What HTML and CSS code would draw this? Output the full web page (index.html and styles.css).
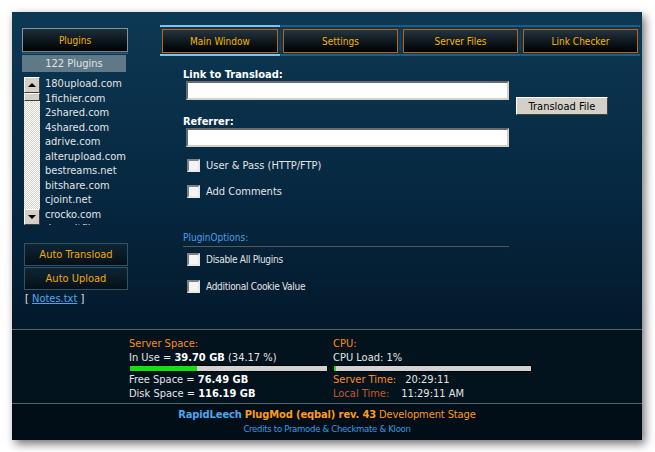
FILE: index.html
```html
<!DOCTYPE html>
<html lang="en">
<head>
    <meta charset="UTF-8">
    <title>RapidLeech PlugMod</title>
    <link rel="stylesheet" href="styles.css">
</head>
<body>
    <div class="window">
        <div class="top">
            <div class="sidebar">
                <div class="side-btn plugins-btn">Plugins</div>
                <div class="plugin-count">122 Plugins</div>

                <div class="plugin-list">
                    <div class="scrollbar">
                        <div class="sb-btn"><span class="arrow-up"></span></div>
                        <div class="sb-thumb"></div>
                        <div class="sb-track"></div>
                        <div class="sb-btn"><span class="arrow-down"></span></div>
                    </div>
                    <div class="list-items">
                        <div>180upload.com</div>
                        <div>1fichier.com</div>
                        <div>2shared.com</div>
                        <div>4shared.com</div>
                        <div>adrive.com</div>
                        <div>alterupload.com</div>
                        <div>bestreams.net</div>
                        <div>bitshare.com</div>
                        <div>cjoint.net</div>
                        <div>crocko.com</div>
                        <div>depositfiles.com</div>
                    </div>
                </div>

                <div class="side-btn auto-btn first">Auto Transload</div>
                <div class="side-btn auto-btn">Auto Upload</div>
                <div class="notes">[ <a href="#">Notes.txt</a> ]</div>
            </div>

            <div class="main">
                <div class="tabs">
                    <div class="tab active"><div class="tab-btn">Main Window</div></div>
                    <div class="tab"><div class="tab-btn">Settings</div></div>
                    <div class="tab"><div class="tab-btn">Server Files</div></div>
                    <div class="tab"><div class="tab-btn">Link Checker</div></div>
                </div>

                <div class="form">
                    <div class="form-row">
                        <div class="fields">
                            <div class="field-label">Link to Transload:</div>
                            <div class="text-input"></div>
                            <div class="field-label second">Referrer:</div>
                            <div class="text-input"></div>
                        </div>
                        <div class="win-btn">Transload File</div>
                    </div>

                    <div class="check-row first">
                        <span class="checkbox"></span>
                        <span>User &amp; Pass (HTTP/FTP)</span>
                    </div>
                    <div class="check-row">
                        <span class="checkbox"></span>
                        <span>Add Comments</span>
                    </div>

                    <div class="section-title">PluginOptions:</div>
                    <div class="check-row small first">
                        <span class="checkbox"></span>
                        <span>Disable All Plugins</span>
                    </div>
                    <div class="check-row small">
                        <span class="checkbox"></span>
                        <span>Additional Cookie Value</span>
                    </div>
                </div>
            </div>
        </div>

        <div class="stats">
            <div class="stat-col">
                <div class="stat-label">Server Space:</div>
                <div>In Use = <b>39.70 GB</b> (34.17 %)</div>
                <div class="bar"><div class="bar-fill" style="width: 34.17%"></div></div>
                <div>Free Space = <b>76.49 GB</b></div>
                <div>Disk Space = <b>116.19 GB</b></div>
            </div>
            <div class="stat-col">
                <div class="stat-label">CPU:</div>
                <div>CPU Load: 1%</div>
                <div class="bar"><div class="bar-fill" style="width: 1%"></div></div>
                <div><span class="stat-label server-label">Server Time:</span> 20:29:11</div>
                <div><span class="local-label">Local Time:</span> 11:29:11 AM</div>
            </div>
        </div>

        <div class="footer">
            <div class="footer-title">
                <b class="blue">RapidLeech</b> <b>PlugMod (eqbal) rev. 43</b> Development Stage
            </div>
            <div class="credits">Credits to Pramode &amp; Checkmate &amp; Kloon</div>
        </div>
    </div>
</body>
</html>
```

FILE: styles.css
```css
:root {
    --tab-text: #f5b400;
    --orange: #ff8a14;
    --blue: #4aa8f0;
    --text: #e4e4e4;
    --win: #d4d0c8;
}

body {
    margin: 0;
    padding: 0;
    background: #fff;
    font-family: "DejaVu Sans Condensed", "DejaVu Sans", sans-serif;
    font-size: 11px;
    color: var(--text);
}

.window {
    margin: 12px;
    width: 630px;
    height: 428px;
    display: flex;
    flex-direction: column;
    box-shadow: 3px 4px 9px rgba(0,0,0,0.55);
}

.top {
    height: 317px;
    display: flex;
    background: linear-gradient(#0d3853, #062740 60%, #03192a);
}

/* sidebar */

.sidebar {
    width: 106px;
    margin-left: 10px;
    padding-top: 16px;
}

.side-btn {
    box-sizing: border-box;
    display: flex;
    justify-content: center;
    align-items: center;
    color: var(--tab-text);
    background: linear-gradient(#1f2e38, #0a141a 60%, #000);
}

.plugins-btn {
    height: 24px;
    border: 1px solid #8192a0;
    font-size: 10px;
    border-bottom: 1px solid #6f8290;
    box-shadow: 0 1px 0 #1d4a63, 0 2px 0 #2b5870;
}

.plugin-count {
    margin-top: 3px;
    height: 17px;
    line-height: 17px;
    background: #5f7989;
    text-align: center;
    font-size: 11px;
    width: 104px;
}

.plugin-list {
    margin: 5px 0 0 2px;
    height: 148px;
    display: flex;
    overflow: hidden;
}

.scrollbar {
    width: 16px;
    display: flex;
    flex-direction: column;
    flex-shrink: 0;
}

.sb-btn, .sb-thumb {
    box-sizing: border-box;
    background: var(--win);
    border: 1px solid;
    border-color: #fff #404040 #404040 #fff;
    display: flex;
    justify-content: center;
    align-items: center;
}

.sb-btn {
    height: 16px;
}

.sb-thumb {
    height: 8px;
}

.sb-track {
    flex: 1;
    background: repeating-conic-gradient(#ffffff 0 25%, #d4d0c8 0 50%) 0 0 / 2px 2px;
}

.arrow-up, .arrow-down {
    width: 0;
    height: 0;
    border-left: 4px solid transparent;
    border-right: 4px solid transparent;
}

.arrow-up {
    border-bottom: 4px solid #000;
}

.arrow-down {
    border-top: 4px solid #000;
}

.list-items {
    padding-left: 5px;
    line-height: 14.5px;
    white-space: nowrap;
}

.auto-btn {
    margin-left: 2px;
    width: 104px;
    height: 23px;
    border: 1px solid #2f5264;
    font-size: 11px;
    color: #f5a800;
    background: linear-gradient(#0e2533, #041019);
    margin-top: 1px;
}

.auto-btn.first {
    margin-top: 18px;
}

.notes {
    margin: 2px 0 0 3px;
    line-height: 14px;
}

.notes a {
    color: var(--blue);
}

/* main area */

.main {
    margin-left: 32px;
    width: 480px;
    padding-top: 13px;
}

.tabs {
    display: flex;
}

.tab {
    width: 120px;
    box-sizing: border-box;
    padding: 2px 2px 1px;
    border-top: 2px solid #1f5e83;
    border-bottom: 2px solid #1f5e83;
    border-left: 1px solid #163f58;
}

.tab:first-child {
    border-left: none;
}

.tab.active {
    border-color: #7cc4ec;
}

.tab-btn {
    height: 24px;
    box-sizing: border-box;
    border: 1px solid #c2620e;
    background: linear-gradient(#26353f, #0d171d 55%, #000);
    display: flex;
    justify-content: center;
    align-items: center;
    font-size: 10px;
    color: var(--tab-text);
}

.form {
    padding: 12px 0 0 23px;
}

.form-row {
    display: flex;
}

.fields {
    width: 326px;
}

.field-label {
    font-weight: bold;
    line-height: 13px;
    color: #fff;
}

.field-label.second {
    margin-top: 15px;
}

.text-input {
    margin-left: 3px;
    height: 19px;
    box-sizing: border-box;
    background: #fff;
    border: 2px solid;
    border-color: #6a6a6a #d4d0c8 #d4d0c8 #6a6a6a;
}

.win-btn {
    margin: 29px 0 0 7px;
    width: 92px;
    height: 18px;
    box-sizing: border-box;
    background: var(--win);
    border: 1px solid;
    border-color: #fff #404040 #404040 #fff;
    color: #000;
    display: flex;
    justify-content: center;
    align-items: center;
}

.check-row {
    display: flex;
    align-items: center;
    height: 13px;
    margin-top: 13px;
    padding-left: 4px;
    font-size: 11px;
}

.check-row.first {
    margin-top: 12px;
}

.checkbox {
    width: 13px;
    height: 13px;
    box-sizing: border-box;
    background: #f4f4f4;
    border: 2px solid;
    border-color: #808080 #e8e8e8 #e8e8e8 #808080;
    margin-right: 6px;
}

.section-title {
    margin-top: 34px;
    font-size: 10px;
    line-height: 12px;
    color: #4a9fe6;
    width: 326px;
    padding-bottom: 2px;
    border-bottom: 1px solid #585858;
}

.check-row.small {
    font-size: 10px;
    letter-spacing: -0.3px;
    margin-top: 14px;
}

.check-row.small.first {
    margin-top: 6px;
}

/* stats */

.stats {
    height: 74px;
    border-top: 1px solid #56636b;
    background: #02131e;
    display: flex;
    justify-content: center;
    gap: 5px;
    padding-left: 7px;
    padding-top: 7px;
    box-sizing: border-box;
    line-height: 13.5px;
}

.stats b {
    color: #fff;
}

.stat-col {
    width: 199px;
}

.stat-label {
    color: var(--orange);
}

.server-label {
    display: inline-block;
    width: 69px;
}

.local-label {
    display: inline-block;
    width: 65px;
    color: #c65a22;
}

.bar {
    margin: 1px 0 1px;
    height: 7px;
    box-sizing: border-box;
    border: 1px solid #000;
    background: #d2d2d2;
}

.bar-fill {
    height: 100%;
    background: #14e014;
}

/* footer */

.footer {
    flex: 1;
    border-top: 1px solid #56636b;
    background: #010e17;
    text-align: center;
    padding-top: 4px;
}

.footer-title {
    color: #ff9a1a;
    font-size: 11px;
    line-height: 14px;
    letter-spacing: -0.1px;
}

.footer-title .blue {
    color: var(--blue);
}

.credits {
    font-size: 9.5px;
    letter-spacing: -0.3px;
    color: #3b9ae0;
    line-height: 13px;
}
```
